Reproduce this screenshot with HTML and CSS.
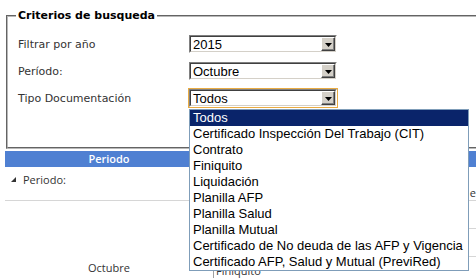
FILE: index.html
```html
<!DOCTYPE html>
<html lang="es">
<head>
<meta charset="utf-8">
<title>Criterios de busqueda</title>
<link rel="stylesheet" href="styles.css">
</head>
<body>
<div class="page">
  <fieldset class="criteria">
    <legend>Criterios de busqueda</legend>
    <div class="form">
      <div class="row">
        <span class="label">Filtrar por año</span>
        <div class="select">
          <div class="field"><span class="value">2015</span><span class="btn"><svg width="7" height="4" viewBox="0 0 7 4"><polygon points="0,0 7,0 3.5,4" fill="#000"/></svg></span></div>
        </div>
      </div>
      <div class="row">
        <span class="label">Período:</span>
        <div class="select">
          <div class="field"><span class="value">Octubre</span><span class="btn"><svg width="7" height="4" viewBox="0 0 7 4"><polygon points="0,0 7,0 3.5,4" fill="#000"/></svg></span></div>
        </div>
      </div>
      <div class="row">
        <span class="label">Tipo Documentación</span>
        <div class="select-wrap">
          <div class="select focused">
            <div class="field"><span class="value">Todos</span><span class="btn"><svg width="7" height="4" viewBox="0 0 7 4"><polygon points="0,0 7,0 3.5,4" fill="#000"/></svg></span></div>
          </div>
          <ul class="options">
            <li class="active">Todos</li>
            <li>Certificado Inspección Del Trabajo (CIT)</li>
            <li>Contrato</li>
            <li>Finiquito</li>
            <li>Liquidación</li>
            <li>Planilla AFP</li>
            <li>Planilla Salud</li>
            <li>Planilla Mutual</li>
            <li>Certificado de No deuda de las AFP y Vigencia</li>
            <li>Certificado AFP, Salud y Mutual (PreviRed)</li>
          </ul>
        </div>
      </div>
    </div>
  </fieldset>

  <div class="grid">
    <div class="grid-head">
      <div class="th">Periodo</div>
      <div class="th"></div>
    </div>
    <div class="group-row">
      <div class="group-label"><svg class="expander" width="5" height="5" viewBox="0 0 5 5"><polygon points="5,0 5,5 0,5" fill="#333"/></svg>Periodo:</div>
      <div class="group-right">e</div>
    </div>
    <div class="grid-body">
      <div class="cell-period">Octubre</div>
      <div class="docs">
        <div class="doc"></div>
        <div class="doc"></div>
        <div class="doc">Finiquito</div>
      </div>
    </div>
  </div>
</div>
</body>
</html>
```

FILE: styles.css
```css
html, body {
  margin: 0;
  padding: 0;
}

body {
  width: 476px;
  height: 278px;
  overflow: hidden;
  background: #fff;
  font-family: "DejaVu Sans", sans-serif;
}

.criteria {
  margin: 9px 0 0 6px;
  padding: 13px 0 40px 10px;
  border: 2px groove #b8b8b8;
  width: 540px;
  box-sizing: border-box;
  min-width: 0;
}

.criteria legend {
  font: bold 11px "DejaVu Sans", sans-serif;
  color: #000;
  padding: 0 2px;
  margin-left: -2px;
}

.form {
  display: flex;
  flex-direction: column;
  gap: 9px;
}

.row {
  display: flex;
  align-items: center;
  height: 18px;
}

.label {
  width: 171px;
  flex: none;
  font-size: 11px;
  color: #333;
}

.select {
  width: 148px;
  height: 18px;
  box-sizing: border-box;
  border: 1px solid;
  border-color: #808080 #ffffff #ffffff #808080;
  display: flex;
}

.select.focused {
  box-shadow: 0 0 0 1px #e9ac44;
}

.field {
  flex: 1;
  display: flex;
  align-items: stretch;
  border: 1px solid;
  border-color: #404040 #d4d0c8 #d4d0c8 #404040;
  background: #fff;
  font: 13px "Liberation Sans", Arial, sans-serif;
  color: #000;
}

.value {
  flex: 1;
  padding-left: 2px;
  line-height: 15px;
}

.btn {
  width: 14px;
  box-sizing: border-box;
  background: #d4d0c8;
  border: 1px solid;
  border-color: #ffffff #404040 #404040 #ffffff;
  box-shadow: inset -1px -1px 0 #808080;
  display: flex;
  align-items: center;
  justify-content: center;
}

.btn svg {
  display: block;
  margin-top: 1px;
}

.select-wrap {
  position: relative;
}

.options {
  position: absolute;
  left: 0;
  top: 20px;
  width: 280px;
  box-sizing: border-box;
  margin: 0;
  padding: 0;
  list-style: none;
  border: 1px solid #7f9db9;
  background: #fff;
  font: 13px "Liberation Sans", Arial, sans-serif;
  color: #000;
  z-index: 2;
}

.options li {
  height: 16px;
  line-height: 16px;
  padding-left: 3px;
  white-space: nowrap;
}

.options li.active {
  background: #0a246a;
  color: #fff;
}

.grid {
  margin: 2px 0 0 5px;
  width: 471px;
  font: 11px "Open Sans", sans-serif;
  color: #333;
}

.grid-head {
  display: grid;
  grid-template-columns: 208px 1fr;
  height: 16px;
  background: #4f80d2;
  color: #fff;
  font-weight: 600;
  line-height: 16px;
  text-align: center;
}

.group-row {
  display: grid;
  grid-template-columns: 208px 1fr;
  height: 33px;
  border-bottom: 1px solid #d6d6d6;
}

.group-label {
  display: flex;
  align-items: center;
  gap: 7px;
  padding: 5px 0 0 6px;
  align-self: start;
  line-height: 15px;
}

.expander {
  display: block;
}

.group-right {
  text-align: right;
  padding-top: 18px;
  line-height: 15px;
}

.grid-body {
  display: grid;
  grid-template-columns: 208px 1fr;
}

.cell-period {
  text-align: center;
  padding-top: 59px;
  line-height: 15px;
}

.docs {
  border-left: 1px solid #a0a0a0;
}

.doc {
  height: 27px;
  line-height: 27px;
  padding-left: 2px;
  border-bottom: 1px solid #d6d6d6;
}
```
